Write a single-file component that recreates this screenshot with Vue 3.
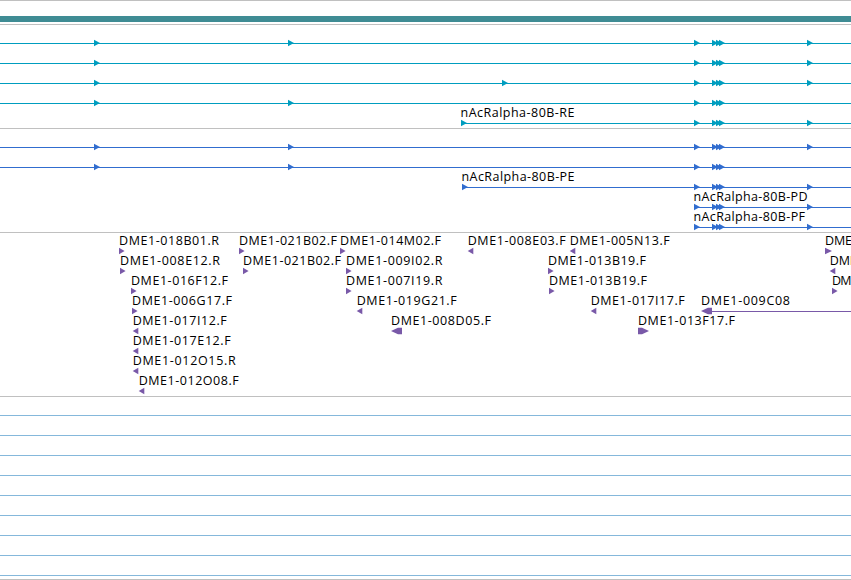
<template>
  <div class="browser">
    <div class="overview"></div>
    <div class="contig"></div>

    <div v-for="track in tracks" :key="track.name" class="track" :class="track.name">
      <svg class="row" v-for="(row, i) in track.rows" :key="i" width="851" height="20">
        <rect
          v-if="row.from !== undefined"
          class="line"
          :x="row.from"
          y="13"
          :width="851 - row.from"
          height="1"
        />
        <path v-for="(m, j) in row.marks" :key="j" class="mark" :d="arrow(m)" />
        <text
          v-for="(l, k) in row.labels"
          :key="k"
          :x="l.x"
          y="7"
          :textLength="l.w"
          lengthAdjust="spacing"
        >{{ l.text }}</text>
      </svg>
    </div>

    <!-- empty tracks -->
    <div class="empty">
      <div v-for="n in 9" :key="n" class="empty-row"></div>
    </div>
    <div class="footer"></div>
  </div>
</template>

<script setup>
// right pointing unless left is set, w is the total width
const arrow = ({ x, w = 6, left }) => {
  const head = Math.min(w, 7);
  if (left) {
    return `M${x} 13 L${x + head} 9.7 H${x + w} V16.3 H${x + head} Z`;
  }
  return `M${x} 9.7 H${x + w - head} L${x + w} 13 L${x + w - head} 16.3 H${x} Z`;
};

const exons = (...xs) => xs.map((x) => ({ x }));
const shared = [694, 712, 716, 719];

const feature = (x, text, w, left = false, size = 5.6) => ({ x, text, w, left, size });

const featureRow = (items, from) => ({
  from,
  marks: items.map((f) => ({ x: f.x, w: f.size, left: f.left })),
  labels: items.map((f) => ({ x: f.x, text: f.text, w: f.w })),
});

const tracks = [
  {
    name: "transcripts",
    rows: [
      { from: 0, marks: exons(94, 288, ...shared, 807) },
      { from: 0, marks: exons(94, ...shared, 807) },
      { from: 0, marks: exons(94, 502, ...shared, 807) },
      { from: 0, marks: exons(94, 288, ...shared) },
      {
        from: 461,
        marks: exons(461, ...shared, 807),
        labels: [{ x: 460.5, text: "nAcRalpha-80B-RE", w: 114 }],
      },
    ],
  },
  {
    name: "proteins",
    rows: [
      { from: 0, marks: exons(94, 288, ...shared, 807) },
      { from: 0, marks: exons(94, 288, ...shared) },
      {
        from: 462,
        marks: exons(462, ...shared, 807),
        labels: [{ x: 461.5, text: "nAcRalpha-80B-PE", w: 113 }],
      },
      {
        from: 694,
        marks: exons(...shared, 807),
        labels: [{ x: 693.5, text: "nAcRalpha-80B-PD", w: 114 }],
      },
      {
        from: 694,
        marks: exons(...shared, 807),
        labels: [{ x: 693.5, text: "nAcRalpha-80B-PF", w: 111.5 }],
      },
    ],
  },
  {
    name: "clones",
    rows: [
      featureRow([
        feature(119, "DME1-018B01.R", 100),
        feature(239, "DME1-021B02.F", 98),
        feature(340, "DME1-014M02.F", 101),
        feature(467.7, "DME1-008E03.F", 98, true),
        feature(569.7, "DME1-005N13.F", 100, true),
        feature(825, "DME", 27, false, 7),
      ]),
      featureRow([
        feature(120, "DME1-008E12.R", 100),
        feature(243, "DME1-021B02.F", 98),
        feature(346, "DME1-009I02.R", 96.5),
        feature(548, "DME1-013B19.F", 98),
        feature(829.7, "DME", 27, true),
      ]),
      featureRow([
        feature(131, "DME1-016F12.F", 97),
        feature(346, "DME1-007I19.R", 96.5),
        feature(549, "DME1-013B19.F", 98),
        feature(832, "DM", 19.5),
      ]),
      featureRow(
        [
          feature(132, "DME1-006G17.F", 100),
          feature(356.7, "DME1-019G21.F", 100, true),
          feature(590.7, "DME1-017I17.F", 94, true),
          feature(701, "DME1-009C08", 89, true, 11),
        ],
        712
      ),
      featureRow([
        feature(132.7, "DME1-017I12.F", 94, true),
        feature(391, "DME1-008D05.F", 100, true, 11),
        feature(638, "DME1-013F17.F", 97, false, 11),
      ]),
      featureRow([feature(132.7, "DME1-017E12.F", 98, true)]),
      featureRow([feature(132.7, "DME1-012O15.R", 103, true)]),
      featureRow([feature(138.7, "DME1-012O08.F", 100, true)]),
    ],
  },
];
</script>

<style>
body {
  margin: 0;
  background: #fff;
}
</style>

<style scoped>
.browser {
  width: 851px;
  height: 580px;
  overflow: hidden;
  background: #fff;
}
.overview {
  height: 15px;
  border-top: 1px solid #c0c0c0;
}
.contig {
  height: 6px;
  margin-bottom: 2px;
  background: #3f8c94;
}
.track {
  box-sizing: border-box;
  height: 104px;
  padding-top: 5px;
  border-top: 1px solid #c0c0c0;
}
.row {
  display: block;
  overflow: visible;
}
.transcripts {
  color: #009dbf;
}
.proteins {
  color: #316dcf;
}
.clones {
  height: 164px;
  color: #7959a8;
}
.line,
.mark {
  fill: currentColor;
}
text {
  fill: #000;
  font-family: "Open Sans", "Noto Sans", sans-serif;
  font-size: 12.5px;
}
.empty {
  box-sizing: border-box;
  height: 183px;
  border-top: 1px solid #c0c0c0;
}
.empty-row {
  height: 19px;
  border-bottom: 1px solid #85b8db;
}
.empty-row:first-child {
  height: 18px;
}
.footer {
  height: 1px;
  background: #c0c0c0;
}
</style>
